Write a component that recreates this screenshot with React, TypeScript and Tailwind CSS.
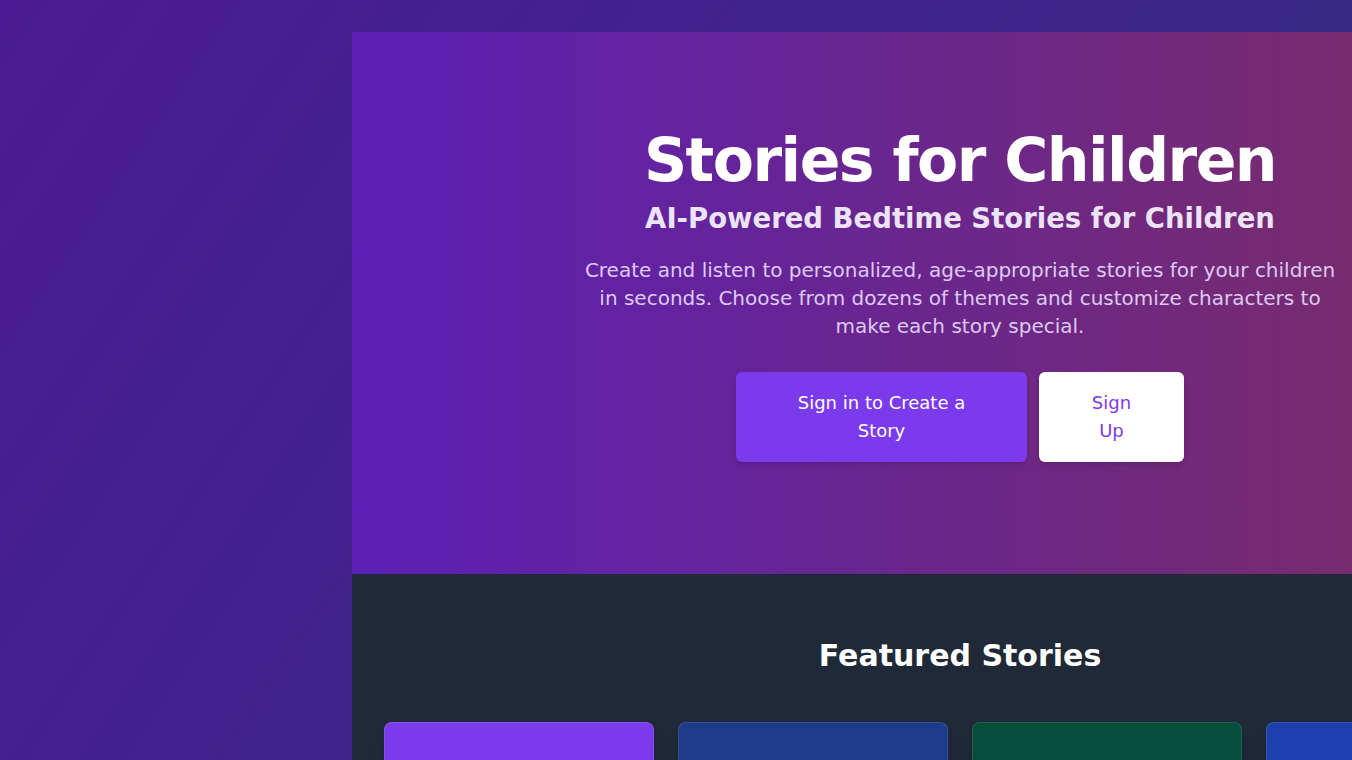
import React from "react";

const featured = [
    { id: 1, color: "bg-[#7c3aed]" },
    { id: 2, color: "bg-[#1e3a8a]" },
    { id: 3, color: "bg-[#064e3b]" },
    { id: 4, color: "bg-[#1e40af]" },
];

function Hero() {
    return (
        <section className="bg-[linear-gradient(90deg,#5b1fb5,#7d2e5f)] pt-[98px] pb-[112px] px-8 text-center">
            <h1 className="text-6xl leading-none font-bold tracking-tight text-white">
                Stories for Children
            </h1>
            <h2 className="mt-2.5 text-[27.5px] leading-9 font-bold text-[#ebe4f7]">
                AI-Powered Bedtime Stories for Children
            </h2>
            <p className="mt-5 mx-auto max-w-3xl text-xl leading-7 text-[#dccaf2]">
                Create and listen to personalized, age-appropriate stories for your children in seconds. Choose from dozens of themes and customize characters to make each story special.
            </p>
            <div className="mt-8 mx-auto max-w-md flex gap-3">
                <button className="w-[291px] px-10 py-4 border border-transparent rounded-md bg-[#7c3aed] text-white text-lg leading-7 shadow-md">
                    Sign in to Create a Story
                </button>
                <button className="w-[145px] px-10 py-4 border border-transparent rounded-md bg-white text-[#7c3aed] text-lg leading-7 shadow-md">
                    Sign Up
                </button>
            </div>
        </section>
    );
}

function Featured() {
    return (
        <section className="bg-[#1f2937] py-16 px-8">
            <h2 className="text-3xl leading-9 font-bold text-white text-center">Featured Stories</h2>
            <div className="mt-12 grid grid-cols-4 gap-6">
                {featured.map((s) => (
                    <div key={s.id} className={`${s.color} h-[260px] rounded-lg border border-white/10 shadow-lg`}></div>
                ))}
            </div>
        </section>
    );
}

export default function App() {
    return (
        <div className="h-screen w-screen overflow-hidden bg-[linear-gradient(124deg,#4c1b93,#312e81)] font-['DejaVu_Sans',sans-serif]">
            <div className="flex pt-8">
                <div className="w-[352px] shrink-0"></div>
                <main className="w-[1216px] shrink-0">
                    <Hero />
                    <Featured />
                </main>
            </div>
        </div>
    );
}
